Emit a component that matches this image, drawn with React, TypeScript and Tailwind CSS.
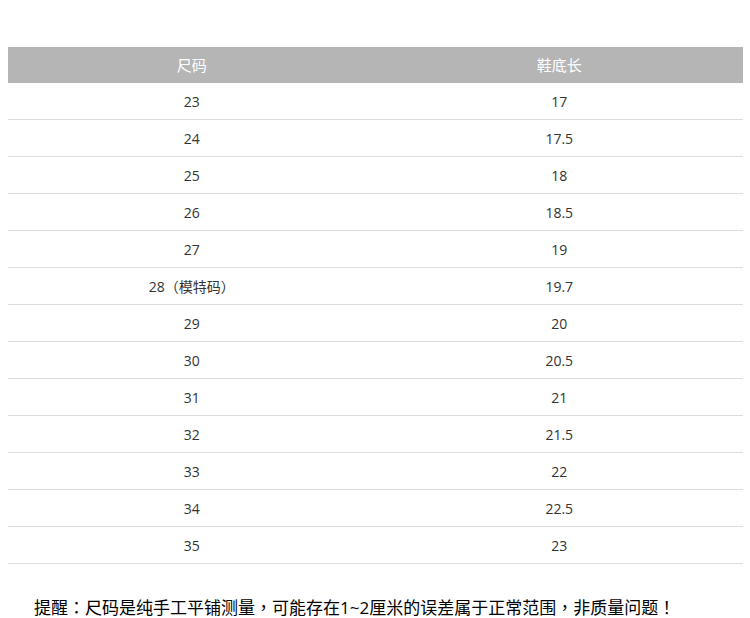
import React from 'react';

const rows: [string, string][] = [
  ['23', '17'],
  ['24', '17.5'],
  ['25', '18'],
  ['26', '18.5'],
  ['27', '19'],
  ['28（模特码）', '19.7'],
  ['29', '20'],
  ['30', '20.5'],
  ['31', '21'],
  ['32', '21.5'],
  ['33', '22'],
  ['34', '22.5'],
  ['35', '23'],
];

const App: React.FC = () => {
  return (
    <div
      className="w-[750px] h-[618px] bg-white overflow-hidden pt-[47px]"
      style={{ fontFamily: '"Open Sans", "Noto Sans CJK TC", "Noto Sans CJK SC", sans-serif' }}
    >
      <div className="ml-2 w-[735px]">
        {/* header */}
        <div className="grid grid-cols-2 h-[36px] bg-[#b5b5b5] text-white text-[15px]">
          <div className="flex items-center justify-center">尺码</div>
          <div className="flex items-center justify-center">鞋底长</div>
        </div>

        {rows.map(([size, len]) => (
          <div key={size} className="grid grid-cols-2 h-[37px] border-b border-[#dddddd] text-[14px] text-[#333333]">
            <div className="flex items-center justify-center">{size}</div>
            <div className="flex items-center justify-center">{len}</div>
          </div>
        ))}
      </div>

      <p className="mt-[32px] pl-[34px] text-[17px] leading-[24px] text-black">
        提醒：尺码是纯手工平铺测量，可能存在1~2厘米的误差属于正常范围，非质量问题！
      </p>
    </div>
  );
};

export default App;
